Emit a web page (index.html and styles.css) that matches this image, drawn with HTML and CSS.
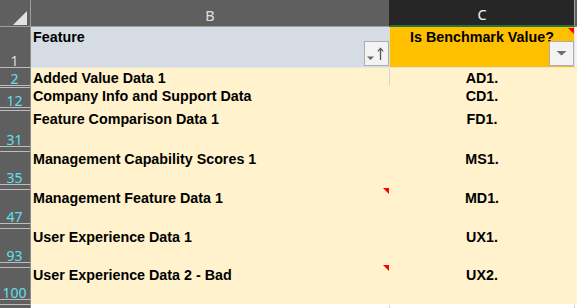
FILE: index.html
```html
<!DOCTYPE html>
<html>
<head>
<meta charset="utf-8">
<link rel="stylesheet" href="styles.css">
</head>
<body>
<div class="sheet">
  <div class="row hdr">
    <div class="rh corner"><svg width="30" height="26" viewBox="0 0 30 26"><polygon points="13,25 27,25 27,11" fill="#e2e2e2"/></svg></div>
    <div class="ch colb">B</div>
    <div class="ch colc">C</div>
    <div class="ch cold"></div>
  </div>
  <div class="row r1">
    <div class="rh plain">1</div>
    <div class="cell b head">Feature
      <span class="fbtn"><svg width="23" height="23" viewBox="0 0 23 23"><polygon points="2,14.5 9,14.5 5.5,18" fill="#666"/><line x1="15.5" y1="6.5" x2="15.5" y2="18" stroke="#555" stroke-width="1.3"/><polyline points="12.8,9.4 15.5,6.4 18.2,9.4" fill="none" stroke="#555" stroke-width="1.2"/></svg></span>
    </div>
    <div class="cell c head orange">Is Benchmark Value?
      <span class="note top1"></span>
      <span class="fbtn"><svg width="23" height="23" viewBox="0 0 23 23"><polygon points="6.5,9 16.5,9 11.5,13.5" fill="#6d6d6d"/></svg></span>
    </div>
    <div class="cell d head"></div>
  </div>
  <div class="row r2">
    <div class="rh">2</div>
    <div class="cell b grid p2">Added Value Data 1</div>
    <div class="cell c p2">AD1.</div>
    <div class="cell d"></div>
  </div>
  <div class="row r12">
    <div class="rh m1">12</div>
    <div class="cell b p2">Company Info and Support Data</div>
    <div class="cell c p2">CD1.</div>
    <div class="cell d"></div>
  </div>
  <div class="row r31">
    <div class="rh m2">31</div>
    <div class="cell b p3">Feature Comparison Data 1</div>
    <div class="cell c p3">FD1.</div>
    <div class="cell d"></div>
  </div>
  <div class="row r35">
    <div class="rh m4">35</div>
    <div class="cell b p4">Management Capability Scores 1</div>
    <div class="cell c p4">MS1.</div>
    <div class="cell d"></div>
  </div>
  <div class="row r47">
    <div class="rh m4">47</div>
    <div class="cell b p5">Management Feature Data 1<span class="note top3"></span></div>
    <div class="cell c p5">MD1.</div>
    <div class="cell d"></div>
  </div>
  <div class="row r93">
    <div class="rh m4">93</div>
    <div class="cell b p5">User Experience Data 1</div>
    <div class="cell c p5">UX1.</div>
    <div class="cell d"></div>
  </div>
  <div class="row r100">
    <div class="rh m4">100</div>
    <div class="cell b p4">User Experience Data 2 - Bad<span class="note top2"></span></div>
    <div class="cell c p4">UX2.</div>
    <div class="cell d"></div>
  </div>
  <div class="row tail">
    <div class="rh"></div>
    <div class="cell b"></div>
    <div class="cell c"></div>
    <div class="cell d"></div>
  </div>
  <div class="row blank">
    <div class="rh"></div>
    <div class="cell b"></div>
    <div class="cell c"></div>
    <div class="cell d"></div>
  </div>
</div>
</body>
</html>
```

FILE: styles.css
```css
* { box-sizing: border-box; }
html, body { margin: 0; padding: 0; background: #ffffff; overflow: hidden; }
.sheet { width: 577px; height: 308px; overflow: hidden; }
.row { display: flex; }

.rh {
  width: 31px;
  flex: none;
  background: #5f5f5f;
  border-right: 1px solid #8e8e8e;
  border-bottom: 1px solid #bdbdbd;
  color: #5fe0ee;
  font-family: "Noto Sans", "Open Sans", sans-serif;
  font-size: 14px;
  line-height: 13px;
  display: flex;
  align-items: flex-end;
  justify-content: center;
  padding-right: 1px;
}
.rh.plain { color: #dcdcdc; }
.rh.m1 { box-shadow: inset 0 1px 0 #5f5f5f, inset 0 2px 0 #bdbdbd; }
.rh.m2 { box-shadow: inset 0 2px 0 #5f5f5f, inset 0 3px 0 #bdbdbd; }
.rh.m4 { box-shadow: inset 0 4px 0 #5f5f5f, inset 0 5px 0 #bdbdbd; }
.rh.corner { border-bottom-color: #9e9e9e; border-right-color: #9e9e9e; align-items: stretch; padding: 0; }
.rh.corner svg { display: block; }

.hdr { height: 27px; }
.ch {
  background: #5f5f5f;
  color: #e0e0e0;
  font-family: "Noto Sans", "Open Sans", sans-serif;
  font-size: 14.5px;
  display: flex;
  align-items: center;
  justify-content: center;
  padding-top: 3px;
  border-bottom: 1px solid #9e9e9e;
}
.ch.colb { width: 359px; border-right: 1px solid #262626; }
.ch.colc { width: 185px; background: #262626; color: #f2f2f2; border-bottom: 2px solid #217346; border-right: 1px solid #9e9e9e; }
.ch.cold { flex: 1; }

.cell {
  position: relative;
  background: #fff2cc;
  font-family: "Liberation Sans", Arial, sans-serif;
  font-weight: bold;
  font-size: 14.3px;
  line-height: 16px;
  color: #000;
  white-space: nowrap;
  border-bottom: 1px solid #fff2cc;
}
.cell.b { width: 359px; padding-left: 2px; border-right: 1px solid #fff2cc; }
.cell.c { width: 185px; text-align: center; border-right: 1px solid #fff2cc; }
.cell.d { flex: 1; }
.cell.grid { border-right-color: #d4d4d4; }

.cell.head { background: #d6dce4; border-bottom-color: #e6e6e6; padding-top: 2px; }
.cell.b.head { border-right-color: #dadada; }
.cell.c.head.orange { background: #ffc000; border-right-color: #e6e6e6; }
.cell.d.head { background: #f2f2f2; }

.p2 { padding-top: 2px; }
.p3 { padding-top: 3px; }
.p4 { padding-top: 4px; }
.p5 { padding-top: 5px; }

.r1 { height: 41px; }
.r2 { height: 18px; }
.r12 { height: 22px; }
.r31 { height: 39px; }
.r35 { height: 38px; }
.r47 { height: 39px; }
.r93 { height: 39px; }
.r100 { height: 37px; }
.tail { height: 5px; }
.tail .cell { border-bottom-color: #ffffff; }
.blank { height: 10px; }
.blank .cell { background: #ffffff; border-bottom-color: #ffffff; }
.blank .cell.b, .blank .cell.c { border-right-color: #d4d4d4; }
.tail .cell.b, .tail .cell.c { border-right-color: #fff2cc; }

.fbtn {
  position: absolute;
  right: 0;
  bottom: 1px;
  width: 25px;
  height: 25px;
  background: #f3f3f3;
  border: 1px solid #adadad;
}
.fbtn svg { display: block; }

.note {
  position: absolute;
  right: 0;
  width: 6px;
  height: 6px;
  background: #ff0000;
  clip-path: polygon(0 0, 100% 0, 100% 100%);
}
.note.top1 { top: 1px; }
.note.top2 { top: 2px; }
.note.top3 { top: 3px; }
```
